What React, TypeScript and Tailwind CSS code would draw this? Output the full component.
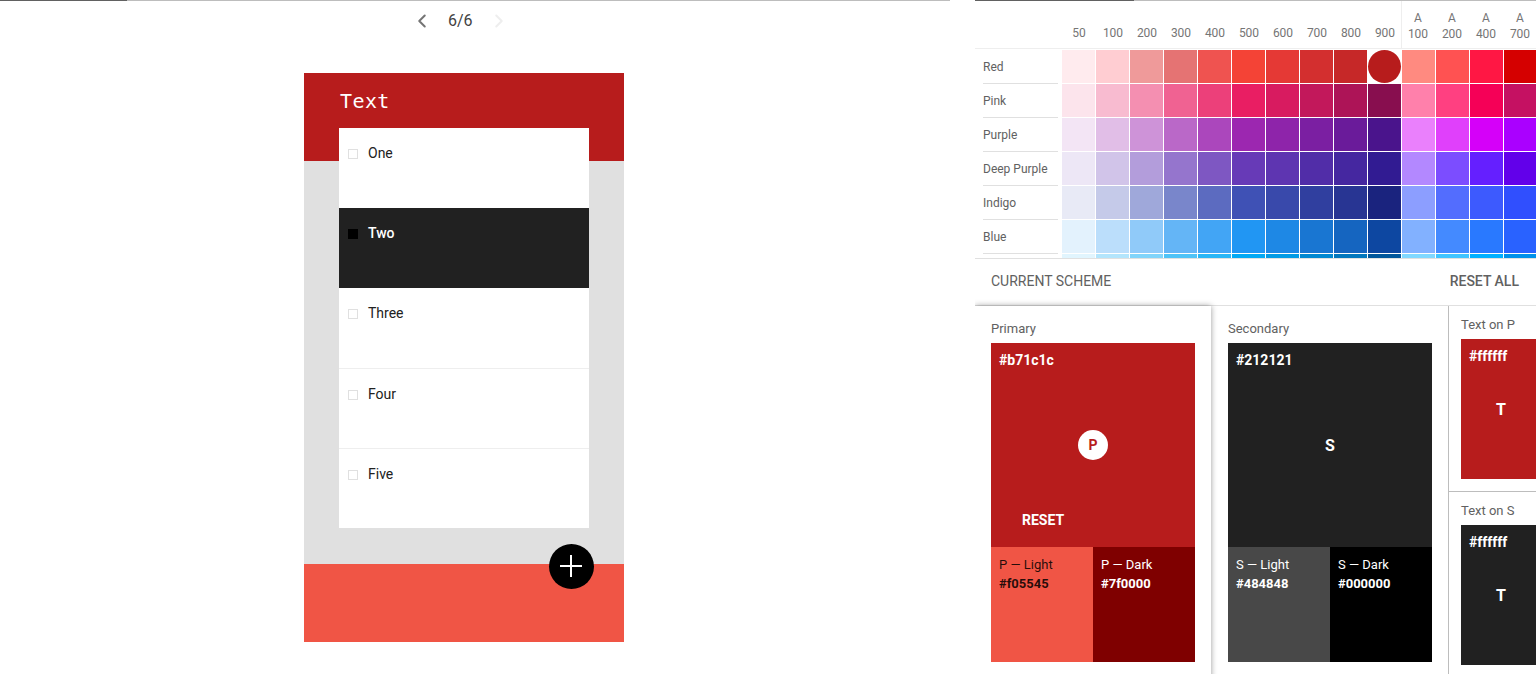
import { ChevronLeft, ChevronRight } from "lucide-react";

const shades = ["50", "100", "200", "300", "400", "500", "600", "700", "800", "900"];
const accents = ["100", "200", "400", "700"];

const palette = [
  { name: "Red", colors: ["#ffebee", "#ffcdd2", "#ef9a9a", "#e57373", "#ef5350", "#f44336", "#e53935", "#d32f2f", "#c62828", "#b71c1c", "#ff8a80", "#ff5252", "#ff1744", "#d50000"] },
  { name: "Pink", colors: ["#fce4ec", "#f8bbd0", "#f48fb1", "#f06292", "#ec407a", "#e91e63", "#d81b60", "#c2185b", "#ad1457", "#880e4f", "#ff80ab", "#ff4081", "#f50057", "#c51162"] },
  { name: "Purple", colors: ["#f3e5f5", "#e1bee7", "#ce93d8", "#ba68c8", "#ab47bc", "#9c27b0", "#8e24aa", "#7b1fa2", "#6a1b9a", "#4a148c", "#ea80fc", "#e040fb", "#d500f9", "#aa00ff"] },
  { name: "Deep Purple", colors: ["#ede7f6", "#d1c4e9", "#b39ddb", "#9575cd", "#7e57c2", "#673ab7", "#5e35b1", "#512da8", "#4527a0", "#311b92", "#b388ff", "#7c4dff", "#651fff", "#6200ea"] },
  { name: "Indigo", colors: ["#e8eaf6", "#c5cae9", "#9fa8da", "#7986cb", "#5c6bc0", "#3f51b5", "#3949ab", "#303f9f", "#283593", "#1a237e", "#8c9eff", "#536dfe", "#3d5afe", "#304ffe"] },
  { name: "Blue", colors: ["#e3f2fd", "#bbdefb", "#90caf9", "#64b5f6", "#42a5f5", "#2196f3", "#1e88e5", "#1976d2", "#1565c0", "#0d47a1", "#82b1ff", "#448aff", "#2979ff", "#2962ff"] },
  // only the top few pixels of this row show, its label is scrolled out of view
  { name: "", colors: ["#e1f5fe", "#b3e5fc", "#81d4fa", "#4fc3f7", "#29b6f6", "#03a9f4", "#039be5", "#0288d1", "#0277bd", "#01579b", "#80d8ff", "#40c4ff", "#00b0ff", "#0091ea"] },
];

const items = ["One", "Two", "Three", "Four", "Five"];

const TopLine = ({ done }: { done: string }) => (
  <div className="h-px shrink-0 bg-[#bdbdbd]">
    <div className={`h-px bg-[#616161] ${done}`} />
  </div>
);

const ListRow = ({ label, active, divided }: { label: string; active: boolean; divided: boolean }) => (
  <div
    className={`flex h-20 items-start gap-[10px] pl-[9px] pt-[15px] ${
      active ? "bg-[#212121] font-medium text-white" : "text-[#212121]"
    } ${divided ? "border-t border-[#eeeeee]" : ""}`}
  >
    <span
      className={`mt-[6px] size-[10px] border ${active ? "border-black bg-black" : "border-[#e0e0e0] bg-white"}`}
    />
    <span className="text-sm leading-5">{label}</span>
  </div>
);

const Phone = () => (
  <div className="relative flex h-[569px] w-[320px] flex-col font-['Roboto',sans-serif]">
    <div className="h-[88px] shrink-0 bg-[#b71c1c] pl-9 pt-[15px] font-['DejaVu_Sans_Mono',monospace] text-xl leading-[26px] tracking-[0.4px] text-white">
      Text
    </div>
    <div className="flex-1 bg-[#e0e0e0] px-[35px]">
      <div className="relative -mt-[33px] w-[250px] bg-white">
        {items.map((item) => (
          <ListRow key={item} label={item} active={item === "Two"} divided={item === "Four" || item === "Five"} />
        ))}
      </div>
    </div>
    <div className="h-[78px] shrink-0 bg-[#f05545]" />
    <div className="absolute left-[244.5px] top-[470.5px] flex size-[45px] items-center justify-center rounded-full bg-black">
      <svg width="24" height="24" viewBox="0 0 24 24" fill="none" stroke="white" strokeWidth="2">
        <path d="M12 1v22M1 12h22" />
      </svg>
    </div>
  </div>
);

const Preview = () => (
  <div className="flex w-[950px] shrink-0 flex-col">
    <TopLine done="w-[127px]" />
    <div className="ml-[411px] flex h-[39px] items-center">
      <ChevronLeft size={22} strokeWidth={2.2} className="text-[#757575]" />
      <span className="ml-[15px] w-[24px] whitespace-nowrap font-['Roboto',sans-serif] text-base text-[#424242]">
        6/6
      </span>
      <ChevronRight size={22} strokeWidth={2.2} className="ml-4 text-[#eeeeee]" />
    </div>
    <div className="ml-[304px] mt-[33px]">
      <Phone />
    </div>
  </div>
);

const PaletteGrid = () => (
  <div className="h-[258px] shrink-0 overflow-hidden border-b border-[#e0e0e0]">
    <div className="flex h-[48px] border-b border-[#eeeeee] text-xs leading-4 text-[#757575]">
      <div className="w-[87px] shrink-0" />
      {shades.map((shade) => (
        <div key={shade} className="flex w-[34px] shrink-0 items-end justify-center pb-[7px]">
          {shade}
        </div>
      ))}
      <div className="-ml-px flex shrink-0 border-l border-[#eeeeee]">
        {accents.map((shade) => (
          <div key={shade} className="-ml-px mr-px flex w-[34px] shrink-0 flex-col items-center pt-[9px] leading-4">
            <span>A</span>
            <span>{shade}</span>
          </div>
        ))}
      </div>
    </div>
    <div className="pt-px">
      {palette.map((row, rowIndex) => (
        <div key={rowIndex} className="flex h-[34px]">
          <div className="ml-2 w-[75px] shrink-0 border-b border-[#e0e0e0] pt-[7px] text-xs leading-5 text-[#616161]">
            {row.name}
          </div>
          <div className="w-1 shrink-0" />
          {row.colors.map((color, i) =>
            rowIndex === 0 && i === 9 ? (
              <div key={color} className="w-[34px] shrink-0 pr-px">
                <div className="size-[33px] rounded-full" style={{ backgroundColor: color }} />
              </div>
            ) : (
              <div key={color} className="w-[34px] shrink-0 border-b border-r border-white" style={{ backgroundColor: color }} />
            ),
          )}
        </div>
      ))}
    </div>
  </div>
);

const SubSwatch = ({ title, hex, bg, fg }: { title: string; hex: string; bg: string; fg: string }) => (
  <div className={`h-[115px] w-[102px] px-2 pt-2 text-[13px] leading-[19px] ${bg} ${fg}`}>
    <div>{title}</div>
    <div className="font-bold">{hex}</div>
  </div>
);

const Primary = () => (
  <div className="relative z-10 h-[380px] w-[236px] shrink-0 bg-white px-4 pt-[13px] shadow-[0_0_6px_rgba(0,0,0,0.4)]">
    <div className="mb-[5px] text-[13px] leading-[19px] text-[#616161]">Primary</div>
    <div className="relative flex h-[204px] flex-col bg-[#b71c1c] px-2 pt-[7px] text-white">
      <div className="text-sm font-bold leading-5">#b71c1c</div>
      <div className="absolute left-[87px] top-[87px] flex size-[30px] items-center justify-center rounded-full bg-white text-sm font-bold text-[#b71c1c]">
        P
      </div>
      <div className="ml-[23px] mt-auto pb-[17px] text-sm font-bold leading-5">RESET</div>
    </div>
    <div className="flex">
      <SubSwatch title="P — Light" hex="#f05545" bg="bg-[#f05545]" fg="text-black/85" />
      <SubSwatch title="P — Dark" hex="#7f0000" bg="bg-[#7f0000]" fg="text-white" />
    </div>
  </div>
);

const Secondary = () => (
  <div className="ml-[17px] w-[204px] shrink-0 pt-[13px]">
    <div className="mb-[5px] text-[13px] leading-[19px] text-[#616161]">Secondary</div>
    <div className="relative h-[204px] bg-[#212121] px-2 pt-[7px] text-white">
      <div className="text-sm font-bold leading-5">#212121</div>
      <div className="absolute inset-0 flex items-center justify-center pt-px text-base font-bold">S</div>
    </div>
    <div className="flex">
      <SubSwatch title="S — Light" hex="#484848" bg="bg-[#484848]" fg="text-white" />
      <SubSwatch title="S — Dark" hex="#000000" bg="bg-black" fg="text-white" />
    </div>
  </div>
);

const TextOn = ({ title, bg }: { title: string; bg: string }) => (
  <div className="h-[185px] pl-3 pt-[9px]">
    <div className="mb-[5px] text-[13px] leading-[19px] text-[#616161]">{title}</div>
    <div className={`relative h-[140px] w-20 px-2 pt-[7px] text-white ${bg}`}>
      <div className="text-sm font-bold leading-5">#ffffff</div>
      <div className="absolute inset-0 flex items-center justify-center pt-px text-base font-bold">T</div>
    </div>
  </div>
);

const Editor = () => (
  <div className="flex min-w-0 flex-1 flex-col overflow-hidden font-['Roboto',sans-serif]">
    <TopLine done="w-[159px]" />
    <PaletteGrid />
    <div className="flex h-[47px] shrink-0 items-center justify-between border-b border-[#e0e0e0] pb-0.5 pl-4 pr-[17px] text-sm text-[#616161]">
      <span>CURRENT SCHEME</span>
      <span className="font-medium">RESET ALL</span>
    </div>
    <div className="flex flex-1">
      <Primary />
      <Secondary />
      <div className="ml-4 w-[88px] shrink-0 border-l border-[#bdbdbd]">
        <div className="border-b border-[#bdbdbd]">
          <TextOn title="Text on P" bg="bg-[#b71c1c]" />
        </div>
        <TextOn title="Text on S" bg="bg-[#212121]" />
      </div>
    </div>
  </div>
);

export default function App() {
  return (
    <div className="flex h-[674px] w-[1536px] gap-[25px] overflow-hidden bg-white">
      <Preview />
      <Editor />
    </div>
  );
}
